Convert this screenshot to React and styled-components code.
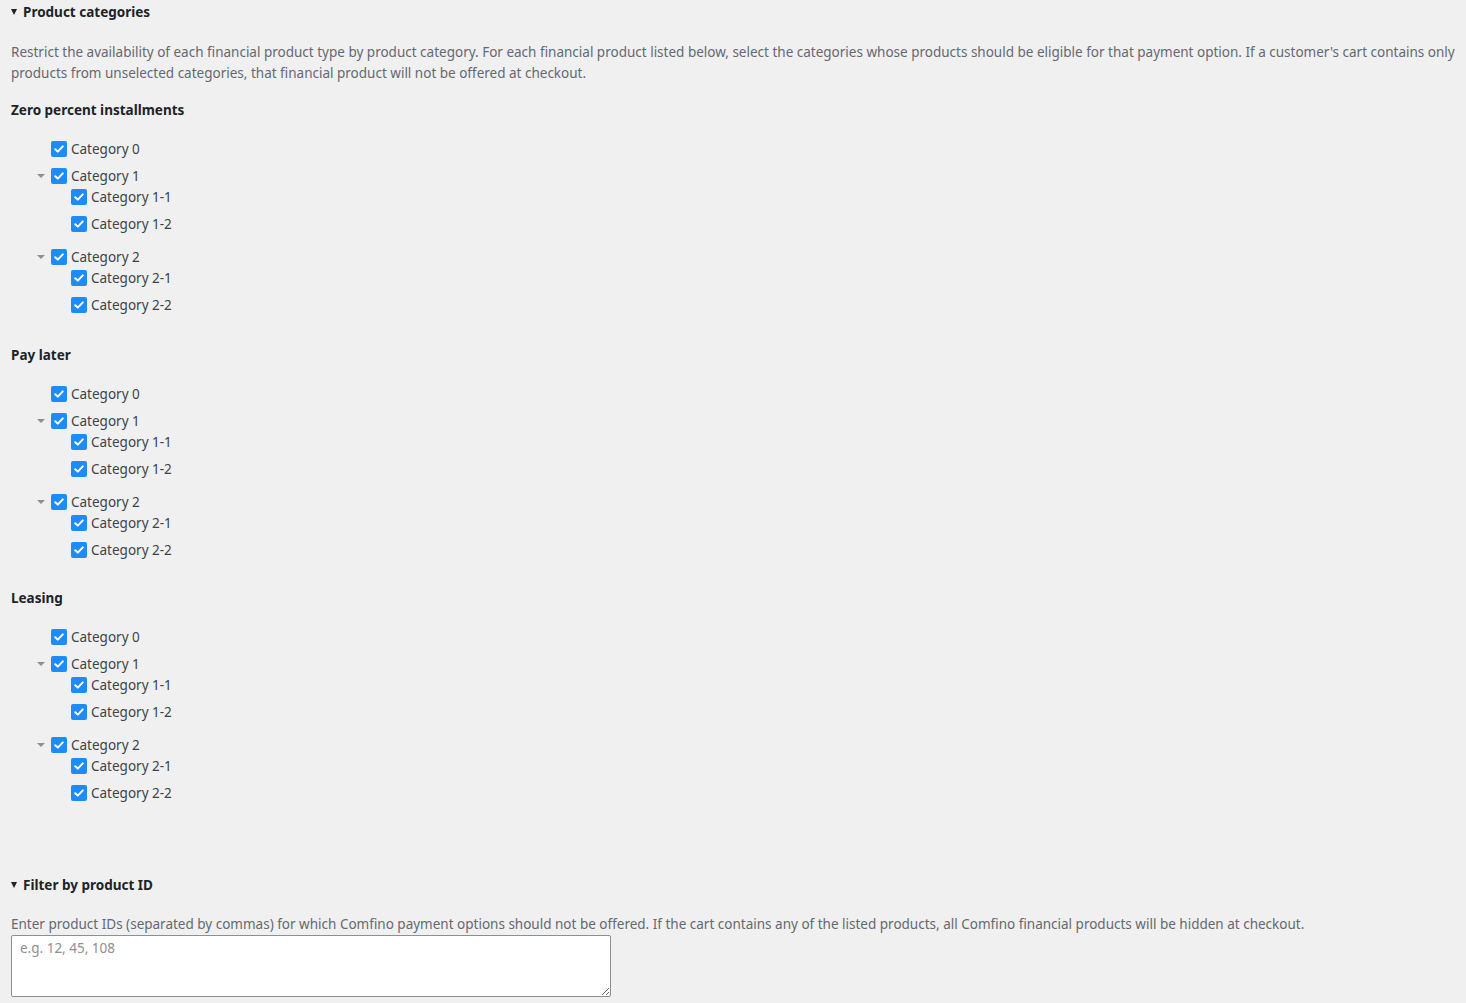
import styled, { createGlobalStyle } from "styled-components";

const GlobalStyle = createGlobalStyle`
  body {
    margin: 0;
    background: #f0f0f1;
    font-family: "Noto Sans", "Open Sans", sans-serif;
    font-size: 13.5px;
    color: #3c434a;
  }
`;

const Page = styled.div`
  padding: 0 2px 6px 11px;
`;

const SectionToggle = styled.h3`
  display: flex;
  align-items: center;
  gap: 5px;
  margin: 0;
  padding-top: ${(p) => p.$top || 0}px;
  height: 24px;
  font-size: 13.5px;
  font-weight: 700;
  color: #1d2327;

  &::before {
    content: "";
    width: 0;
    height: 0;
    border-left: 3.5px solid transparent;
    border-right: 3.5px solid transparent;
    border-top: 6px solid #1d2327;
    margin-right: 1px;
  }
`;

const Description = styled.p`
  margin: ${(p) => p.$top || 16}px 0 0;
  line-height: 21px;
  color: #646970;
`;

const ProductTitle = styled.h4`
  margin: ${(p) => p.$top}px 0 0;
  line-height: 21px;
  font-size: 13.5px;
  font-weight: 700;
  color: #1d2327;
`;

const Tree = styled.ul`
  list-style: none;
  margin: 0;
  padding: 0 0 0 ${(p) => (p.$nested ? 20 : 40)}px;
`;

const TreeTop = styled(Tree)`
  margin-top: 17px;
`;

// flow-root keeps the nested list's last margin inside the parent item
const Item = styled.li`
  display: flow-root;
  margin: 0 0 6px;
`;

const Row = styled.label`
  position: relative;
  display: flex;
  align-items: center;
  gap: 4px;
  height: 21px;
  color: #3c434a;
`;

const Toggle = styled.span`
  position: absolute;
  left: -14px;
  top: 9px;
  width: 0;
  height: 0;
  border-left: 4px solid transparent;
  border-right: 4px solid transparent;
  border-top: 4px solid #8c8f94;
`;

const Box = styled.span`
  display: inline-flex;
  align-items: center;
  justify-content: center;
  width: 16px;
  height: 16px;
  border-radius: 2px;
  background: #1e8cf8;
  flex: none;
`;

const Check = () => (
  <Box>
    <svg width="12" height="12" viewBox="0 0 12 12">
      <path
        d="M2.2 6.2 L4.8 8.6 L9.8 3.4"
        fill="none"
        stroke="#fff"
        strokeWidth="2"
        strokeLinecap="round"
        strokeLinejoin="round"
      />
    </svg>
  </Box>
);

const IdInput = styled.textarea`
  display: block;
  box-sizing: border-box;
  width: 600px;
  height: 62px;
  margin-top: 0;
  padding: 2px 8px;
  border: 1px solid #8c8f94;
  border-radius: 2px;
  background: #fff;
  font-family: inherit;
  font-size: 13.5px;
  line-height: 21px;
  color: #2c3338;

  &::placeholder {
    color: #8c8f94;
  }
`;

const categories = [
  { name: "Category 0" },
  { name: "Category 1", children: ["Category 1-1", "Category 1-2"] },
  { name: "Category 2", children: ["Category 2-1", "Category 2-2"] },
];

const products = [
  { title: "Zero percent installments", top: 16 },
  { title: "Pay later", top: 24 },
  { title: "Leasing", top: 22 },
];

function CategoryTree() {
  return (
    <TreeTop>
      {categories.map((cat) => (
        <Item key={cat.name}>
          <Row>
            {cat.children && <Toggle />}
            <Check />
            {cat.name}
          </Row>
          {cat.children && (
            <Tree $nested>
              {cat.children.map((child) => (
                <Item key={child}>
                  <Row>
                    <Check />
                    {child}
                  </Row>
                </Item>
              ))}
            </Tree>
          )}
        </Item>
      ))}
    </TreeTop>
  );
}

export default function App() {
  return (
    <Page>
      <GlobalStyle />
      <SectionToggle>Product categories</SectionToggle>
      <Description $top={18}>
        Restrict the availability of each financial product type by product
        category. For each financial product listed below, select the
        categories whose products should be eligible for that payment option.
        If a customer's cart contains only products from unselected
        categories, that financial product will not be offered at checkout.
      </Description>
      {products.map((p) => (
        <div key={p.title}>
          <ProductTitle $top={p.top}>{p.title}</ProductTitle>
          <CategoryTree />
        </div>
      ))}
      <SectionToggle $top={58}>Filter by product ID</SectionToggle>
      <Description $top={17}>
        Enter product IDs (separated by commas) for which Comfino payment
        options should not be offered. If the cart contains any of the listed
        products, all Comfino financial products will be hidden at checkout.
      </Description>
      <IdInput placeholder="e.g. 12, 45, 108" />
    </Page>
  );
}
